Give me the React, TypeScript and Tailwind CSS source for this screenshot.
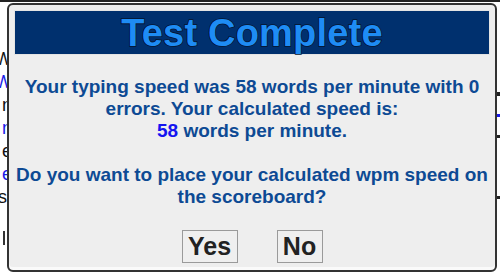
export default function App() {
  const leftBits = [
    { t: "W", c: "text-[#111]" },
    { t: "W", c: "text-[#1a1ae6]" },
    { t: "n", c: "text-[#111]" },
    { t: "n", c: "text-[#1a1ae6]" },
    { t: "e", c: "text-[#111]" },
    { t: "e", c: "text-[#1a1ae6]" },
    { t: "s:", c: "text-[#111]" },
  ];

  return (
    <div className="relative w-[500px] h-[276px] overflow-hidden bg-white font-['Liberation_Sans',Arial,sans-serif]">
      {/* page behind the dialog */}
      <div className="flex h-[2px] border-b-2 border-[#222]">
        <div className="w-[96px] border-r border-[#222]" />
        <div className="w-[19px] border-r border-[#222]" />
        <div className="w-[178px] border-r border-[#222]" />
        <div className="w-[57px] border-r border-[#222]" />
        <div className="flex-1" />
      </div>
      <div className="flex justify-between pt-[46px]">
        <div className="w-[7px] overflow-hidden flex flex-col items-end text-[18px] leading-[23px]">
          {leftBits.map((b, i) => (
            <div key={i} className={`whitespace-nowrap translate-x-[5px] ${b.c}`}>{b.t}</div>
          ))}
          <div className="mt-[22px] mr-[2px] w-[2px] h-[14px] bg-[#333]" />
        </div>
        <div className="w-[3px] flex flex-col pt-[44px] gap-[18px]">
          <div className="h-[4px] bg-[#222]" />
          <div className="h-[3px] bg-[#1a1ae6]" />
          <div className="h-[3px] bg-[#222]" />
          <div className="mt-[40px] h-[3px] bg-[#222]" />
        </div>
      </div>

      {/* dialog */}
      <div className="absolute left-[7px] top-[3px] w-[490px] h-[269px] rounded-[6px] border-2 border-[#333] bg-[#eeeeee] p-[5px] flex flex-col shadow-[inset_0_-3px_0_#fafafa]">
        <div className="h-[45px] bg-[#00306e] border border-[#e4e4e4] flex items-center justify-center">
          <h1 className="text-[38px] font-bold leading-none text-[#1e8cf4] [-webkit-text-stroke:1.6px_#06152e] [paint-order:stroke_fill] tracking-[0.2px]">
            Test Complete
          </h1>
        </div>
        <div className="mt-[21px] text-center text-[19px] font-bold leading-[22px] text-[#0d4a94] whitespace-nowrap">
          Your typing speed was 58 words per minute with 0
          <br />
          errors. Your calculated speed is:
          <br />
          <span className="text-[#1414f0]">58</span> words per minute.
          <br />
          <br />
          Do you want to place your calculated wpm speed on
          <br />
          the scoreboard?
        </div>
        <div className="mt-[22px] flex justify-center gap-[39px]">
          <button className="h-[33px] w-[56px] bg-[#efefef] border border-[#9a9a9a] text-[25px] font-bold leading-none text-[#222]">
            Yes
          </button>
          <button className="h-[33px] w-[46px] bg-[#efefef] border border-[#9a9a9a] text-[25px] font-bold leading-none text-[#222]">
            No
          </button>
        </div>
      </div>
    </div>
  );
}
